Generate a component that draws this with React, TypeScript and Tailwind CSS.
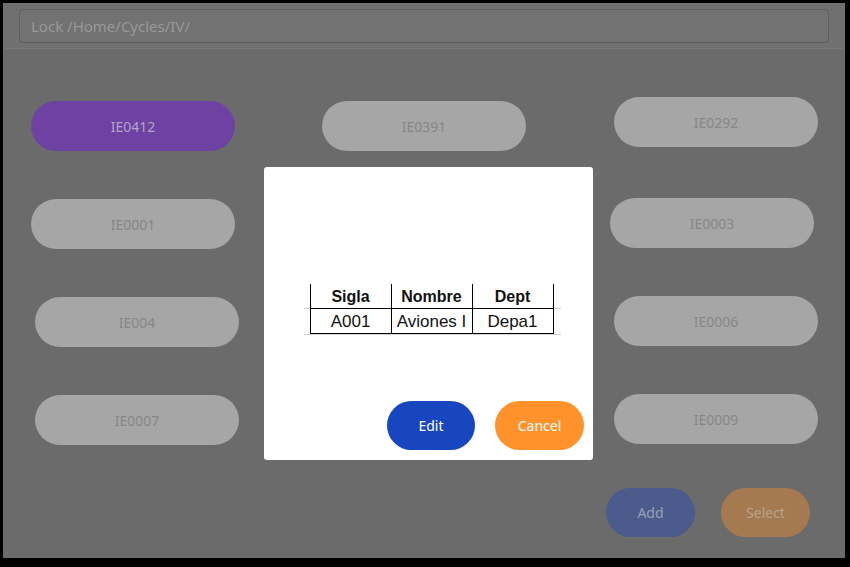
import React from "react";

const Pill = ({
  label,
  cls = "",
  color = "bg-[#a6a6a6] text-[#878787]",
}: {
  label: string;
  cls?: string;
  color?: string;
}) => (
  <div
    className={`w-[204px] h-[50px] rounded-full flex items-center justify-center text-[14px] ${color} ${cls}`}
  >
    {label}
  </div>
);

export default function App() {
  const font = { fontFamily: '"Noto Sans", "Open Sans", sans-serif' };
  return (
    <div className="w-[850px] h-[567px] bg-black pl-[3px] pt-[3px]" style={font}>
      <div className="relative w-[842px] h-[555px] bg-[#6b6b6b] flex flex-col">
        {/* header */}
        <div className="h-[46px] bg-[#707070] border-b border-[#777777] px-[16px] pt-[6px]">
          <div className="h-[34px] rounded-[4px] border border-[#5f5f5f] bg-[#727272] flex items-center px-[11px] text-[15px] text-[#999999]">
            Lock /Home/Cycles/IV/
          </div>
        </div>

        {/* grid rows */}
        <div className="flex flex-col pt-[52px]">
          <div className="flex items-start h-[98px]">
            <Pill label="IE0412" cls="ml-[28px]" color="bg-[#6e42a3] text-[#b3a2c9]" />
            <Pill label="IE0391" cls="ml-[87px]" />
            <Pill label="IE0292" cls="ml-[88px] -mt-[4px]" />
          </div>
          <div className="flex items-start h-[98px]">
            <Pill label="IE0001" cls="ml-[28px]" />
            <Pill label="IE0003" cls="ml-[375px] -mt-[1px]" />
          </div>
          <div className="flex items-start h-[98px]">
            <Pill label="IE004" cls="ml-[32px]" />
            <Pill label="IE0006" cls="ml-[375px] -mt-[1px]" />
          </div>
          <div className="flex items-start h-[93px]">
            <Pill label="IE0007" cls="ml-[32px]" />
            <Pill label="IE0009" cls="ml-[375px] -mt-[1px]" />
          </div>
          <div className="flex items-start justify-end gap-[26px] pr-[35px]">
            <div className="w-[89px] h-[49px] rounded-full bg-[#4a5b8c] flex items-center justify-center text-[14px] text-[#9aa0b3]">
              Add
            </div>
            <div className="w-[89px] h-[49px] rounded-full bg-[#a67a51] flex items-center justify-center text-[14px] text-[#b8a38f]">
              Select
            </div>
          </div>
        </div>

        {/* modal */}
        <div className="absolute left-[261px] top-[164px] w-[329px] h-[293px] bg-white rounded-[3px] flex flex-col">
          <div className="flex-1 flex flex-col items-center pt-[117px]">
            <div
              className="relative ml-[6px] text-[#111111]"
              style={{ fontFamily: '"Liberation Sans", Arial, sans-serif' }}
            >
              <div className="flex h-[24px] font-bold text-[16px]">
                <div className="w-[81px] border-l border-black flex items-center justify-center pt-[2px]">Sigla</div>
                <div className="w-[81px] border-l border-black flex items-center justify-center pt-[2px]">Nombre</div>
                <div className="w-[82px] border-l border-r border-black flex items-center justify-center pt-[2px]">Dept</div>
              </div>
              <div className="absolute left-[-6px] right-[-7px] top-[24px] h-px bg-[#d4d4d4]" />
              <div className="flex h-[26px] border-t border-b border-black relative text-[17px]">
                <div className="w-[81px] border-l border-black flex items-center justify-center pt-[1px]">A001</div>
                <div className="w-[81px] border-l border-black flex items-center justify-center pt-[1px]">Aviones I</div>
                <div className="w-[82px] border-l border-r border-black flex items-center justify-center pt-[1px]">Depa1</div>
              </div>
              <div className="absolute left-[-6px] right-[-7px] top-[50px] h-px bg-[#d4d4d4]" />
            </div>
          </div>
          <div className="flex justify-end gap-[20px] pr-[9px] pb-[10px]">
            <div className="w-[88px] h-[49px] rounded-full bg-[#1746c0] flex items-center justify-center text-[14px] text-white">
              Edit
            </div>
            <div className="w-[89px] h-[49px] rounded-full bg-[#ff922b] flex items-center justify-center text-[14px] text-white">
              Cancel
            </div>
          </div>
        </div>
      </div>
    </div>
  );
}
